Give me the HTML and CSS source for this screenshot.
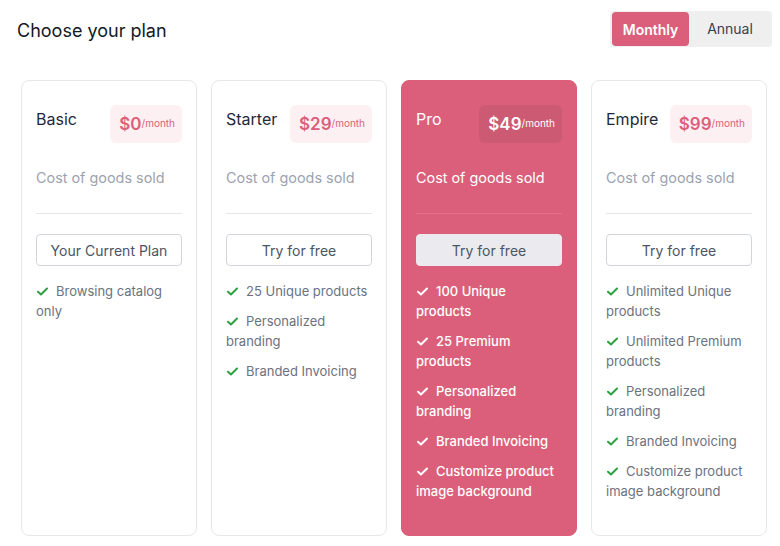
FILE: index.html
```html
<!DOCTYPE html>
<html>
<head>
<meta charset="utf-8">
<link rel="stylesheet" href="styles.css">
</head>
<body>
<div class="page">
  <header class="header">
    <h1 class="title">Choose your plan</h1>
    <div class="toggle">
      <button class="toggle-btn active">Monthly</button>
      <button class="toggle-btn">Annual</button>
    </div>
  </header>
  <div class="cards">
    <div class="card">
      <div class="card-top">
        <div class="name">Basic</div>
        <div class="price"><span class="amount">$0</span><span class="per">/month</span></div>
      </div>
      <div class="desc">Cost of goods sold</div>
      <div class="divider"></div>
      <button class="cta">Your Current Plan</button>
      <ul class="features">
        <li><svg class="check" viewBox="0 0 12 10"><path d="M1 5.2L4.3 8.3L11 1.6" /></svg>Browsing catalog only</li>
      </ul>
    </div>
    <div class="card">
      <div class="card-top">
        <div class="name">Starter</div>
        <div class="price"><span class="amount">$29</span><span class="per">/month</span></div>
      </div>
      <div class="desc">Cost of goods sold</div>
      <div class="divider"></div>
      <button class="cta">Try for free</button>
      <ul class="features">
        <li><svg class="check" viewBox="0 0 12 10"><path d="M1 5.2L4.3 8.3L11 1.6" /></svg>25 Unique products</li>
        <li><svg class="check" viewBox="0 0 12 10"><path d="M1 5.2L4.3 8.3L11 1.6" /></svg>Personalized branding</li>
        <li><svg class="check" viewBox="0 0 12 10"><path d="M1 5.2L4.3 8.3L11 1.6" /></svg>Branded Invoicing</li>
      </ul>
    </div>
    <div class="card featured">
      <div class="card-top">
        <div class="name">Pro</div>
        <div class="price"><span class="amount">$49</span><span class="per">/month</span></div>
      </div>
      <div class="desc">Cost of goods sold</div>
      <div class="divider"></div>
      <button class="cta">Try for free</button>
      <ul class="features">
        <li><svg class="check" viewBox="0 0 12 10"><path d="M1 5.2L4.3 8.3L11 1.6" /></svg>100 Unique products</li>
        <li><svg class="check" viewBox="0 0 12 10"><path d="M1 5.2L4.3 8.3L11 1.6" /></svg>25 Premium products</li>
        <li><svg class="check" viewBox="0 0 12 10"><path d="M1 5.2L4.3 8.3L11 1.6" /></svg>Personalized branding</li>
        <li><svg class="check" viewBox="0 0 12 10"><path d="M1 5.2L4.3 8.3L11 1.6" /></svg>Branded Invoicing</li>
        <li><svg class="check" viewBox="0 0 12 10"><path d="M1 5.2L4.3 8.3L11 1.6" /></svg>Customize product image background</li>
      </ul>
    </div>
    <div class="card">
      <div class="card-top">
        <div class="name">Empire</div>
        <div class="price"><span class="amount">$99</span><span class="per">/month</span></div>
      </div>
      <div class="desc">Cost of goods sold</div>
      <div class="divider"></div>
      <button class="cta">Try for free</button>
      <ul class="features">
        <li><svg class="check" viewBox="0 0 12 10"><path d="M1 5.2L4.3 8.3L11 1.6" /></svg>Unlimited Unique products</li>
        <li><svg class="check" viewBox="0 0 12 10"><path d="M1 5.2L4.3 8.3L11 1.6" /></svg>Unlimited Premium products</li>
        <li><svg class="check" viewBox="0 0 12 10"><path d="M1 5.2L4.3 8.3L11 1.6" /></svg>Personalized branding</li>
        <li><svg class="check" viewBox="0 0 12 10"><path d="M1 5.2L4.3 8.3L11 1.6" /></svg>Branded Invoicing</li>
        <li><svg class="check" viewBox="0 0 12 10"><path d="M1 5.2L4.3 8.3L11 1.6" /></svg>Customize product image background</li>
      </ul>
    </div>
  </div>
</div>
</body>
</html>
```
FILE: styles.css
```css
* { box-sizing: border-box; }
html, body { margin: 0; padding: 0; background: #fff; }
body { font-family: Inter, "Noto Sans", sans-serif; color: #111827; }
.page { width: 780px; height: 546px; overflow: hidden; }
.header {
  display: flex;
  justify-content: space-between;
  align-items: flex-start;
  padding: 11px 8px 0 17px;
  height: 80px;
}
.title {
  margin: 9px 0 0 0;
  font-size: 18px;
  font-weight: 400;
  color: #111827;
  letter-spacing: 0;
}
.toggle {
  display: flex;
  background: #efeff0;
  border-radius: 4px;
  padding: 1px;
  height: 36px;
}
.toggle-btn {
  font-family: inherit;
  border: none;
  background: transparent;
  font-size: 14px;
  color: #374151;
  border-radius: 4px;
  cursor: pointer;
}
.toggle-btn.active {
  background: #db5f7a;
  color: #fff;
  font-weight: 600;
  width: 77px;
  padding: 0;
  margin-left: 1px;
}
.toggle-btn:not(.active) { width: 82px; padding: 0 0 2px 0; }
.cards {
  display: flex;
  gap: 14px;
  padding-left: 21px;
}
.card {
  width: 176px;
  height: 456px;
  border: 1px solid #e5e7eb;
  border-radius: 8px;
  padding: 24px 14px 0 14px;
  background: #fff;
}
.card-top {
  display: flex;
  justify-content: space-between;
  align-items: flex-start;
  height: 38px;
}
.name {
  font-size: 16px;
  color: #1f2937;
  margin-top: 4px;
}
.price {
  background: #fdf0f3;
  border-radius: 6px;
  height: 38px;
  padding: 0 7px 0 9px;
  display: flex;
  align-items: center;
  color: #db5f7a;
  white-space: nowrap;
}
.amount { font-size: 17px; font-weight: 600; }
.per { font-size: 10px; margin-top: -2px; }
.desc {
  margin-top: 26px;
  font-size: 14.4px;
  color: #9ca3af;
  height: 20px;
}
.divider {
  margin-top: 24px;
  border-top: 1px solid #e5e7eb;
}
.cta {
  display: block;
  width: 100%;
  margin-top: 20px;
  height: 32px;
  border: 1px solid #d1d5db;
  border-radius: 4px;
  background: #fff;
  font-family: inherit;
  font-size: 14px;
  color: #4b5563;
}
.features {
  list-style: none;
  margin: 15px 0 0 0;
  padding: 0;
}
.features li {
  font-size: 13px;
  line-height: 20px;
  color: #6b7280;
  margin-bottom: 10px;
}
.check {
  width: 11px;
  height: 9px;
  margin: 0 8px 0 1px;
  vertical-align: 0;
  fill: none;
  stroke: #2ea043;
  stroke-width: 2.2;
  stroke-linecap: round;
  stroke-linejoin: round;
}
.card.featured {
  background: #db5f7a;
  border-color: #db5f7a;
}
.featured .name { color: #fff; }
.featured .price { background: #cd5a73; color: #fff; }
.featured .desc { color: #fff; }
.featured .divider { border-top-color: #e27189; }
.featured .cta { background: #ebebef; border-color: #ebebef; color: #4b5563; }
.featured .features li { color: #fff; font-weight: 500; }
.featured .check { stroke: #fff; }
```
